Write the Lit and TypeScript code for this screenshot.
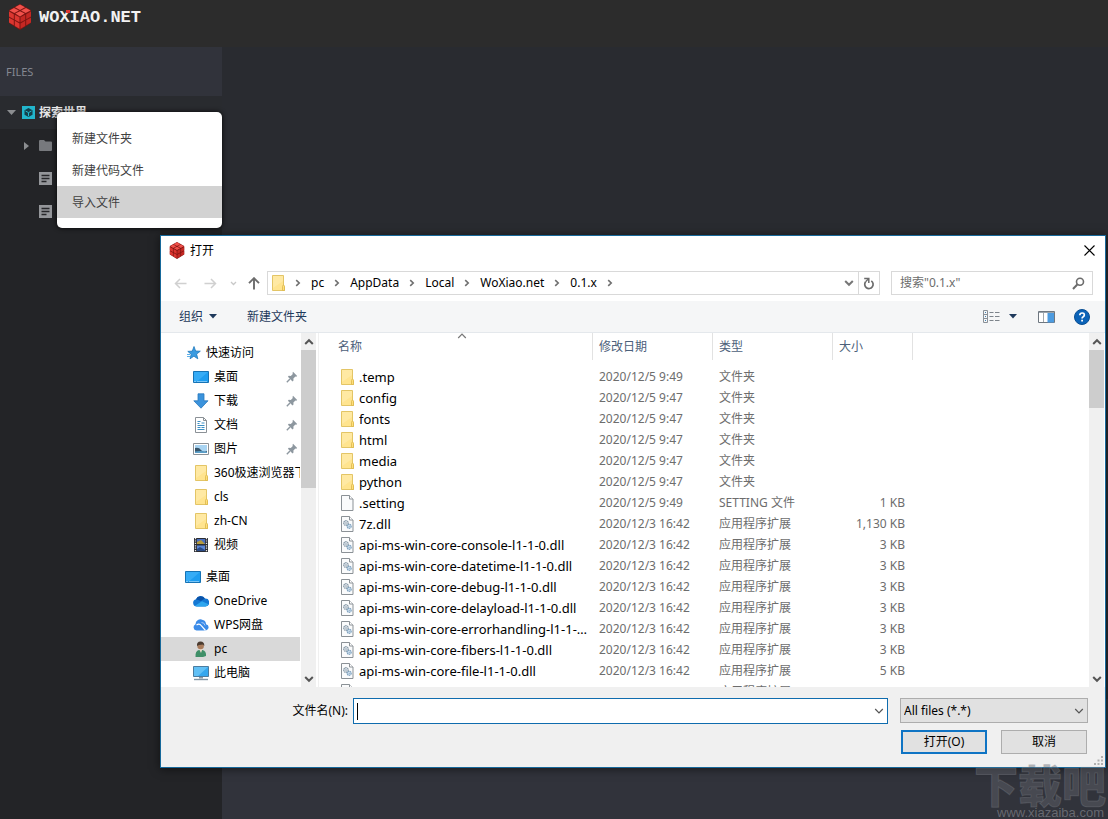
import { LitElement, html, svg, css, nothing } from "lit";
import { customElement } from "lit/decorators.js";

const cube = svg`
  <path d="M12 0 23 6v13L12 26 1 19V6z" fill="#7d1512"/>
  <path d="M12 .5 17 3.300 12 6 7 3.300z M6 4 11 6.600 6.300 9 1.500 6.400z M18 4 22.500 6.400 17.700 9 13 6.600z M12 7.200 16.700 9.600 12 12.400 7.300 9.600z" fill="#f0504a"/>
  <path d="M1 7.600 5.800 10.200v5L1 12.600z M6.800 10.700 11.500 13.300v5L6.800 15.700z M1 13.700 5.800 16.300v5L1 18.600z M6.800 16.800 11.500 19.400v5.400L6.800 22z" fill="#dc3630"/>
  <path d="M23 7.600 18.200 10.200v5L23 12.600z M17.200 10.700 12.500 13.300v5L17.200 15.700z M23 13.700 18.200 16.300v5L23 18.600z M17.200 16.800 12.500 19.400v5.400L17.200 22z" fill="#c42823"/>`;

const folderShape = svg`
  <path d="M.5 .5h11v10l1 1v4H.5z" fill="#ffe48f" stroke="#e3c566"/>
  <path d="M1 1h10v5L1 13z" fill="#ffedb0" opacity=".6"/>
  <path d="M10.500 15.500v-4q0-1.300 1-1.300t1 1.300v4z" fill="#ffdf7a" stroke="#dcb84c" stroke-width=".8"/>`;
const folder = html`<svg width="15" height="16" viewBox="0 0 15 16">${folderShape}</svg>`;
const sideFolder = html`<svg width="16" height="16" viewBox="-2 0 16 16">${folderShape}</svg>`;
const crumbFolder = html`<svg width="13" height="16" viewBox="0 0 13 16">${folderShape}</svg>`;

const pageShape = svg`
  <path d="M.5 .5h8l3.500 3.500v11.500H.5z" fill="#fafbfc" stroke="#8b9196"/>
  <path d="M8.500 .5v3.500h3.500" fill="#fff" stroke="#8b9196"/>`;
const page = html`<svg width="15" height="16" viewBox="0 0 15 16">${pageShape}</svg>`;

const dll = html`<svg width="15" height="16" viewBox="0 0 15 16">${pageShape}
  <circle cx="5" cy="7" r="2.300" fill="#dfe6ec" stroke="#8798a6" stroke-width="1.200" stroke-dasharray="1.400 .4"/>
  <circle cx="5" cy="7" r=".7" fill="#8798a6"/>
  <circle cx="8.200" cy="10.300" r="2" fill="#d3e2ef" stroke="#7fa3c0" stroke-width="1.200" stroke-dasharray="1.400 .4"/>
  <circle cx="8.200" cy="10.300" r=".6" fill="#7fa3c0"/></svg>`;

const sideIcons: Record<string, unknown> = {
  star: html`<svg width="16" height="16" viewBox="0 0 16 16">
    <path d="M9 1.500 10.600 6l4.700.2-3.700 2.900 1.200 4.700L8.900 11.200 5 13.800l1.200-4.500L2.800 6.400l4.500-.3z" fill="#3a9be0" stroke="#1e78bd" stroke-width=".8"/>
    <path d="M2 9.500h3M2 11.500h3" stroke="#5cb0ea"/></svg>`,
  desktop: html`<svg width="16" height="16" viewBox="0 0 16 16">
    <path d="M.5 2.500h15v11H.5z" fill="#1e9df0" stroke="#1673b5"/>
    <path d="M1 3h14L4 12.500H1z" fill="#4bb8fb" opacity=".55"/>
    <path d="M1.500 12.500h2m1 0h7m1 0h2" stroke="#d5efff" stroke-dasharray="1 1"/></svg>`,
  down: html`<svg width="16" height="16" viewBox="0 0 16 16">
    <path d="M5 .8h6v7h4L8 15.200.8 7.800H5z" fill="#3b93dc" stroke="#2a78bd" stroke-width=".8"/></svg>`,
  doc: html`<svg width="16" height="16" viewBox="0 0 16 16">
    <path d="M2.500 .5h8l3 3v12h-11z" fill="#fff" stroke="#8b9196"/><path d="M10.500 .5v3h3" fill="none" stroke="#8b9196"/>
    <path d="M4.500 4.500h3m1 1.500h3M4.500 6.500h2M4.500 8.500h7M4.500 10.500h3m1 0h3M4.500 12.500h7" stroke="#3c8fc4"/></svg>`,
  pic: html`<svg width="16" height="16" viewBox="0 0 16 16">
    <path d="M.5 2.500h15v11H.5z" fill="#fff" stroke="#8b9196"/><path d="M2 4h12v8H2z" fill="#a9d4f2"/>
    <path d="M2 7q4-1 6 2t6 1v2H2z" fill="#38566b"/><path d="M2 10.500q6-1 12 .5v1H2z" fill="#5a9fc9"/></svg>`,
  folder: sideFolder,
  film: html`<svg width="16" height="16" viewBox="0 0 16 16">
    <path d="M1 1h14v14H1z" fill="#2b2d33"/><path d="M2.500 1v14M13.500 1v14" stroke="#e8e8e8" stroke-width="1.300" stroke-dasharray="1.200 1.200"/>
    <path d="M4 2h8v5H4z" fill="#4a6fc0"/><path d="M4 8.500h8v5.500H4z" fill="#5b86d6"/><path d="M4 5l4-2 4 4H4z" fill="#b59a3b"/><path d="M4 12l3-2 5 3v1H4z" fill="#2a4a86"/></svg>`,
  cloud: html`<svg width="16" height="16" viewBox="0 0 16 16">
    <path d="M3.800 13.500A3.700 3.700 0 0 1 3 6.200 5 5 0 0 1 12 5.600 3.900 3.900 0 0 1 12.500 13.500z" fill="#1478d4"/>
    <path d="M3 6.200A5 5 0 0 1 11.900 5.600L8 8z" fill="#0a52a8"/><path d="M2 12.700 9 8.200l6.500 3A3.600 3.600 0 0 1 12.500 13.500H3.800q-1 0-1.800-.8z" fill="#2ea6ee"/></svg>`,
  wps: html`<svg width="16" height="16" viewBox="0 0 16 16">
    <path d="M3.500 13.500A3.300 3.300 0 0 1 2.500 7.200 4.800 4.800 0 0 1 9.800 3 4.300 4.300 0 0 1 13 7.200 3.200 3.200 0 0 1 13 13.500z" fill="#3b8be8"/>
    <path d="M3.500 8q3-2 5 1l4 4.500" fill="none" stroke="#fff" stroke-width="1.200"/><path d="M8.500 5.500q3 0 3.500 3" fill="none" stroke="#a9ccfa"/></svg>`,
  user: html`<svg width="16" height="16" viewBox="0 0 16 16">
    <path d="M2.500 16q-.5-6 3.500-7h3.500q4 1 3.500 6l-3 1z" fill="#3f8f68"/><path d="M6 8h3.500l-1.500 4z" fill="#e8d9c8"/>
    <circle cx="7.600" cy="5" r="3.300" fill="#a97c5c"/><path d="M4 5Q3.500 .5 7.500 .5T11.300 5L10 3.500 6 4z" fill="#4a3b30"/></svg>`,
  pc: html`<svg width="16" height="16" viewBox="0 0 16 16">
    <path d="M.5 1.500h15v10H.5z" fill="#35a7ee" stroke="#4b7c9f"/><path d="M1 2h14L5 11H1z" fill="#7fd0fa" opacity=".6"/>
    <path d="M6 12h4v1.500H6z" fill="#8b9aa5"/><path d="M1 14.500h14" stroke="#8296a5" stroke-width="1.400"/></svg>`,
};

const pin = html`<svg width="12" height="12" viewBox="0 0 12 12">
  <path d="M7 .8 11.200 5l-1 .8-.8-.2-2 2 .1 2-1 .8L1.900 5.800l.9-1 2 .1 2-2-.3-1z" fill="#8d979f"/>
  <path d="M4 8 .8 11.200" stroke="#8d979f" stroke-width="1.400"/></svg>`;

const chevron = (d: string, width = 1.5, color = "#555") =>
  html`<svg width="10" height="8" viewBox="0 0 10 8"><path d=${d} fill="none" stroke=${color} stroke-width=${width}/></svg>`;
const up = "M1.200 6 5 2.200 8.800 6";
const down = "M1.200 2 5 5.800 8.800 2";
const triangle = html`<svg width="8" height="5" viewBox="0 0 8 5"><path d="M0 0h8L4 4.500z" fill="#1f3a5c"/></svg>`;

const places = [
  { icon: "star", text: "快速访问", top: true },
  { icon: "desktop", text: "桌面", pinned: true },
  { icon: "down", text: "下载", pinned: true },
  { icon: "doc", text: "文档", pinned: true },
  { icon: "pic", text: "图片", pinned: true },
  { icon: "folder", text: "360极速浏览器下载" },
  { icon: "folder", text: "cls" },
  { icon: "folder", text: "zh-CN" },
  { icon: "film", text: "视频" },
  { icon: "desktop", text: "桌面", top: true, gap: true },
  { icon: "cloud", text: "OneDrive" },
  { icon: "wps", text: "WPS网盘" },
  { icon: "user", text: "pc", active: true },
  { icon: "pc", text: "此电脑" },
];

const D = "文件夹";
const A = "应用程序扩展";
const files: [unknown, string, string, string, string][] = [
  [folder, ".temp", "2020/12/5 9:49", D, ""],
  [folder, "config", "2020/12/5 9:47", D, ""],
  [folder, "fonts", "2020/12/5 9:47", D, ""],
  [folder, "html", "2020/12/5 9:47", D, ""],
  [folder, "media", "2020/12/5 9:47", D, ""],
  [folder, "python", "2020/12/5 9:47", D, ""],
  [page, ".setting", "2020/12/5 9:49", "SETTING 文件", "1 KB"],
  [dll, "7z.dll", "2020/12/3 16:42", A, "1,130 KB"],
  [dll, "api-ms-win-core-console-l1-1-0.dll", "2020/12/3 16:42", A, "3 KB"],
  [dll, "api-ms-win-core-datetime-l1-1-0.dll", "2020/12/3 16:42", A, "3 KB"],
  [dll, "api-ms-win-core-debug-l1-1-0.dll", "2020/12/3 16:42", A, "3 KB"],
  [dll, "api-ms-win-core-delayload-l1-1-0.dll", "2020/12/3 16:42", A, "3 KB"],
  [dll, "api-ms-win-core-errorhandling-l1-1-0.dll", "2020/12/3 16:42", A, "3 KB"],
  [dll, "api-ms-win-core-fibers-l1-1-0.dll", "2020/12/3 16:42", A, "3 KB"],
  [dll, "api-ms-win-core-file-l1-1-0.dll", "2020/12/3 16:42", A, "5 KB"],
  [dll, "api-ms-win-core-file-l1-2-0.dll", "2020/12/3 16:42", A, "3 KB"],
];

const reset = css`
  * { box-sizing: border-box; }
  svg { display: block; flex: none; }
  button, input, select { font: inherit; color: inherit; margin: 0; padding: 0; border: 0; background: none; border-radius: 0; outline: none; }
  a { color: inherit; text-decoration: none; }
`;

@customElement("scroll-bar")
class ScrollBar extends LitElement {
  static properties = { thumb: { type: Number } };
  declare thumb: number;
  static styles = [reset, css`
    :host { display: flex; flex-direction: column; width: 15px; flex: none; background: #f0f0f0; }
    .arrow { height: 17px; display: grid; place-items: center; }
    .track { flex: 1; }
    .thumb { background: #cdcdcd; }
  `];
  render() {
    return html`
      <button class="arrow" aria-label="向上滚动">${chevron(up, 2)}</button>
      <div class="track"><div class="thumb" style="height:${this.thumb}%"></div></div>
      <button class="arrow" aria-label="向下滚动">${chevron(down, 2)}</button>`;
  }
}

@customElement("open-dialog")
class OpenDialog extends LitElement {
  static styles = [reset, css`
    :host {
      display: flex; flex-direction: column; background: #fff; border: 1px solid #17699b;
      font: 12px/16px "Noto Sans", "Noto Sans CJK SC", sans-serif; color: #000;
      box-shadow: 0 1px 9px rgba(0, 0, 0, .55);
    }
    .title { display: flex; align-items: center; gap: 5px; height: 29px; padding: 0 10px 0 8px; }
    .title .name { flex: 1; font-size: 12px; }
    .nav { display: flex; align-items: center; height: 36px; padding: 0 12px; }
    .nav .arrows { display: flex; align-items: center; width: 94px; }
    .arrows button { display: grid; place-items: center; height: 20px; }
    .arrows .back { width: 15px; }
    .arrows .next { width: 15px; margin-left: 15px; }
    .arrows .recent { width: 18px; margin-left: 6px; }
    .arrows .up { width: 16px; margin-left: 4px; }
    .address { flex: 1; display: flex; align-items: center; height: 24px; border: 1px solid #d9d9d9; padding-left: 4px; }
    .crumbs { flex: 1; display: flex; align-items: center; gap: 10px; padding-bottom: 1px; }
    .address .drop { width: 19px; height: 22px; display: grid; place-items: center; }
    .address .reload { width: 21px; height: 22px; border-left: 1px solid #d9d9d9; display: grid; place-items: center; }
    .search { width: 202px; height: 24px; margin-left: 11px; border: 1px solid #d9d9d9; display: flex; align-items: center; padding: 0 7px 0 8px; }
    .search input { flex: 1; min-width: 0; }
    .search input::placeholder { color: #6d6d6d; opacity: 1; }
    .tools { display: flex; align-items: center; height: 32px; padding: 0 15px 0 18px; background: #f5f6f7; border-bottom: 1px solid #e4e8ec; color: #1e395b; }
    .tools button { display: flex; align-items: center; gap: 6px; }
    .tools .new { margin-left: 30px; }
    .tools .view { margin-left: auto; gap: 9px; }
    .tools .pane { margin-left: 21px; }
    .tools .help { margin-left: 19px; }
    .body { flex: 1; min-height: 0; display: flex; padding-right: 1px; }
    .places { width: 139px; margin: 0; padding: 8px 0 0; list-style: none; overflow: hidden; }
    .places a { display: flex; align-items: center; height: 24px; padding: 0 2px 0 32px; white-space: nowrap; overflow: hidden; }
    .places .top { padding-left: 24px; }
    .places .label { flex: 1; margin-left: 5px; }
    .places .long { flex: none; }
    .places .active { background: #d9d9d9; }
    .places .gap { margin-top: 8px; }
    .side-bar { margin-left: 1px; }
    .split { width: 3px; border-right: 1px solid #f0f0f0; }
    .list { flex: 1; min-width: 0; overflow: hidden; padding-left: 13px; }
    table { width: 100%; table-layout: fixed; border-spacing: 0; }
    .c-name { width: 261px; } .c-date, .c-type { width: 120px; } .c-size { width: 80px; }
    th { height: 27px; padding: 0 0 0 6px; font-weight: 400; text-align: left; color: #4c607a; border-right: 1px solid #e2e2e2; position: relative; }
    th.rest { border: 0; }
    .sort { position: absolute; left: calc(50% - 5px); top: -1px; }
    tbody::before { content: ""; display: block; height: 6px; }
    td { height: 21px; padding: 0 0 0 6px; color: #6d6d6d; white-space: nowrap; }
    td.size { padding-right: 8px; text-align: right; }
    td.file { color: #000; padding: 0 4px 0 9px; font-size: 13px; }
    .entry { display: flex; align-items: center; gap: 3px; }
    .entry .text { overflow: hidden; text-overflow: ellipsis; }
    .foot { background: #f0f0f0; padding: 11px 17px 13px 16px; display: grid; grid-template-columns: 176px 1fr 200px; row-gap: 6px; }
    .foot label { align-self: center; text-align: right; padding-right: 5px; }
    .combo { height: 26px; border: 1px solid #0f6cae; background: #fff; display: flex; align-items: center; padding: 0 3px; }
    .caret { width: 1px; height: 17px; background: #000; }
    .combo input { flex: 1; min-width: 0; }
    .filter { margin-left: 12px; display: grid; height: 25px; }
    .filter select { grid-area: 1 / 1; appearance: none; background: #e1e1e1; border: 1px solid #adadad; padding: 0 3px; }
    .filter svg { grid-area: 1 / 1; justify-self: end; align-self: center; margin-right: 4px; pointer-events: none; }
    .actions { grid-column: 1 / -1; display: flex; justify-content: flex-end; gap: 14px; padding-right: 1px; }
    .actions button { width: 86px; height: 24px; background: #e1e1e1; border: 1px solid #adadad; }
    .actions .primary { border: 2px solid #0f74c4; }
    .grip { position: absolute; right: 2px; bottom: 2px; }
  `];

  render() {
    const crumb = html`<svg width="6" height="8" viewBox="0 0 6 8"><path d="M1.200 1.200 4.200 4 1.200 6.800" fill="none" stroke="#6f6f6f" stroke-width="1.600"/></svg>`;
    return html`
      <div class="title">
        <svg width="16" height="17" viewBox="0 0 24 26">${cube}</svg>
        <span class="name">打开</span>
        <button aria-label="关闭"><svg width="11" height="11" viewBox="0 0 11 11"><path d="M.5 .5l10 10M10.500 .5l-10 10" stroke="#000" stroke-width="1.100"/></svg></button>
      </div>
      <div class="nav">
        <div class="arrows">
          <button class="back" aria-label="后退"><svg width="13" height="11" viewBox="0 0 13 11"><path d="M12.500 5.500H1.500M6 1 1.500 5.500 6 10" fill="none" stroke="#d0d0d0" stroke-width="1.500"/></svg></button>
          <button class="next" aria-label="前进"><svg width="13" height="11" viewBox="0 0 13 11"><path d="M.5 5.500h11M7 1l4.500 4.500L7 10" fill="none" stroke="#d0d0d0" stroke-width="1.500"/></svg></button>
          <button class="recent" aria-label="最近浏览的位置"><svg width="7" height="5" viewBox="0 0 7 5"><path d="M1 1 3.500 3.500 6 1" fill="none" stroke="#c8c8c8" stroke-width="1.300"/></svg></button>
          <button class="up" aria-label="上移"><svg width="12" height="13" viewBox="0 0 12 13"><path d="M6 12.500V1.500M1 6.200 6 1.200l5 5" fill="none" stroke="#6c6c6c" stroke-width="1.900"/></svg></button>
        </div>
        <div class="address">
          <div class="crumbs">${crumbFolder}${["pc", "AppData", "Local", "WoXiao.net", "0.1.x"].map((c) => html`${crumb}<a href="#">${c}</a>`)}${crumb}</div>
          <button class="drop" aria-label="以前的位置">${chevron(down, 2, "#777")}</button>
          <button class="reload" aria-label="刷新"><svg width="12" height="13" viewBox="0 0 12 13"><path d="M8.300 3.900A4.200 4.200 0 1 1 2.600 4.800" fill="none" stroke="#6c6c6c" stroke-width="1.700"/><path d="M1.200 1.500h4.600v4.600" fill="none" stroke="#6c6c6c" stroke-width="1.500"/><path d="M2.600 4.800 5.500 1.800" stroke="#6c6c6c" stroke-width="1.300"/></svg></button>
        </div>
        <div class="search">
          <input aria-label="搜索" placeholder='搜索"0.1.x"'>
          <svg width="13" height="13" viewBox="0 0 13 13"><circle cx="8" cy="4.700" r="3.500" fill="none" stroke="#6c6c6c" stroke-width="1.600"/><path d="M5.300 7.500 1 12" stroke="#6c6c6c" stroke-width="2"/></svg>
        </div>
      </div>
      <div class="tools">
        <button>组织 ${triangle}</button>
        <button class="new">新建文件夹</button>
        <button class="view" aria-label="更改视图">
          <svg width="17" height="13" viewBox="0 0 17 13"><path d="M.5 .5h4v12h-4zM.5 4.500h4M.5 8.500h4" fill="none" stroke="#8a9097"/><path d="M6.500 2.500h4m1.500 0h4.500M6.500 6.500h4m1.500 0h4.500M6.500 10.500h4m1.500 0h4.500" stroke="#7d848b"/><path d="M2 2.500h1M2 6.500h1M2 10.500h1" stroke="#3f82b5"/></svg>
          ${triangle}
        </button>
        <button class="pane" aria-label="显示预览窗格"><svg width="17" height="12" viewBox="0 0 17 12"><path d="M.5 .5h16v11H.5z" fill="#fff" stroke="#6e7780"/><path d="M1 1.500h15" stroke="#9aa3ab"/><path d="M9.500 2v9.500h6.500V2z" fill="#4c9be0"/><path d="M5.500 2v9" stroke="#a0a7ad"/></svg></button>
        <button class="help" aria-label="帮助"><svg width="16" height="16" viewBox="0 0 16 16"><circle cx="8" cy="8" r="7.500" fill="#0b63b8" stroke="#0a4f93"/><path d="M5.800 6.200Q5.900 4 8.100 4t2.200 1.900Q10.300 7 9.200 7.700 8.100 8.300 8.100 9.600" fill="none" stroke="#fff" stroke-width="1.700"/><path d="M7.200 10.800h1.800v1.700H7.200z" fill="#fff"/></svg></button>
      </div>
      <div class="body">
        <ul class="places">
          ${places.map((p) => html`<li class=${p.gap ? "gap" : ""}>
            <a href="#" class="${p.top ? "top" : ""} ${p.active ? "active" : ""}">${sideIcons[p.icon]}<span class="label ${p.text.length > 8 ? "long" : ""}">${p.text}</span>${p.pinned ? pin : nothing}</a></li>`)}
        </ul>
        <scroll-bar class="side-bar" .thumb=${43}></scroll-bar>
        <div class="split"></div>
        <div class="list">
          <table>
            <colgroup><col class="c-name"><col class="c-date"><col class="c-type"><col class="c-size"><col></colgroup>
            <thead><tr>
              <th>名称<span class="sort">${chevron(up, 1.2, "#777")}</span></th>
              <th>修改日期</th><th>类型</th><th>大小</th><th class="rest"></th>
            </tr></thead>
            <tbody>
              ${files.map(([icon, name, date, type, size]) => html`<tr>
                <td class="file"><div class="entry">${icon}<span class="text">${name}</span></div></td>
                <td>${date}</td><td>${type}</td><td class="size">${size}</td><td></td></tr>`)}
            </tbody>
          </table>
        </div>
        <scroll-bar .thumb=${18}></scroll-bar>
      </div>
      <div class="foot">
        <label for="fname">文件名(N):</label>
        <div class="combo"><span class="caret"></span><input id="fname" type="text">${chevron(down, 1.2)}</div>
        <div class="filter">
          <select aria-label="文件类型"><option>All files (*.*)</option></select>
          ${chevron(down, 1.2)}
        </div>
        <div class="actions"><button class="primary">打开(O)</button><button>取消</button></div>
      </div>
      <svg class="grip" width="9" height="9" viewBox="0 0 9 9"><path d="M7 0h2v2H7zM7 3.500h2v2H7zM3.500 3.500h2v2h-2zM7 7h2v2H7zM3.500 7h2v2h-2zM0 7h2v2H0z" fill="#b0b0b0"/></svg>`;
  }
}

@customElement("app-root")
class AppRoot extends LitElement {
  static styles = [reset, css`
    :host {
      display: flex; flex-direction: column; position: relative; height: 100vh; overflow: hidden;
      background: #292b30; font: 12px/16px "Noto Sans", "Noto Sans CJK SC", sans-serif;
    }
    .bar { display: flex; align-items: flex-start; gap: 7px; height: 47px; padding: 4px 8px; background: #2c2c2c; }
    .brand { position: relative; font: 700 17px/27px "Liberation Mono", monospace; color: #f2f2f2; }
    .dot { position: absolute; left: 27px; top: 6px; width: 4px; height: 3px; background: #dc3630; }
    .work { flex: 1; display: flex; min-height: 0; }
    .side { width: 222px; background: #232427; }
    .head { height: 49px; padding: 17px 6px; background: #31333b; color: #858891; font-size: 11px; }
    .root { display: flex; align-items: center; height: 33px; padding-left: 7px; background: #292b2f; color: #e6e6e6; font-weight: 700; }
    .root .mark { margin: 0 4px 0 6px; }
    .node { display: flex; align-items: center; gap: 10px; height: 33px; padding-left: 24px; }
    .leaf { padding-left: 39px; }
    .stage { flex: 1; display: flex; flex-direction: column; justify-content: flex-end; }
    .panel { height: 120px; background: #31333b; }
    .menu {
      position: absolute; left: 57px; top: 112px; width: 165px; padding: 10px 0; border-radius: 5px;
      background: #fff; box-shadow: 0 0 5px rgba(0, 0, 0, .9);
    }
    .menu button { display: block; width: 100%; height: 32px; padding: 2px 0 0 15px; text-align: left; color: #3f3f3f; }
    .menu .hot { background: #d2d2d2; }
    .dialog { position: absolute; left: 160px; right: 2px; top: 235px; bottom: 51px; }
    .mark-text { position: absolute; right: 0; bottom: 0; text-align: right; pointer-events: none; }
    .big { font: 900 44px/44px "Noto Sans CJK SC", sans-serif; color: rgba(100, 103, 111, .45); -webkit-text-stroke: 1px rgba(150, 152, 158, .25); padding-right: 2px; }
    .url { font: 13px/13px "Liberation Sans", sans-serif; color: rgba(140, 142, 149, .6); padding-right: 4px; }
  `];

  render() {
    const note = html`<svg width="13" height="13" viewBox="0 0 13 13"><path d="M0 0h13v13H0z" fill="#94969a"/><path d="M2.500 3.500h8M2.500 6.500h8M2.500 9.500h5" stroke="#26272a" stroke-width="1.300"/></svg>`;
    return html`
      <header class="bar">
        <svg width="24" height="26" viewBox="0 0 24 26">${cube}</svg>
        <span class="brand">WOXIAO.NET<span class="dot"></span></span>
      </header>
      <div class="work">
        <nav class="side">
          <div class="head">FILES</div>
          <div class="root">
            <svg width="9" height="5" viewBox="0 0 9 5"><path d="M0 0h9L4.500 5z" fill="#8b8d90"/></svg>
            <svg class="mark" width="13" height="13" viewBox="0 0 13 13"><path d="M0 0h13v13H0z" fill="#22b5cc"/><path d="M6.500 2 10.500 4.200v4.600l-4 2.200-4-2.200V4.200z" fill="#143f4b"/><path d="M3.500 5 6.500 6.600 9.500 5M6.500 6.600v3.600" fill="none" stroke="#22b5cc"/></svg>
            探索世界
          </div>
          <div class="node">
            <svg width="5" height="8" viewBox="0 0 5 8"><path d="M0 0v8l5-4z" fill="#8b8d90"/></svg>
            <svg width="13" height="11" viewBox="0 0 13 11"><path d="M0 1q0-1 1-1h4l1.500 1.500H12q1 0 1 1V10q0 1-1 1H1q-1 0-1-1z" fill="#77797d"/></svg>
          </div>
          <div class="node leaf">${note}</div>
          <div class="node leaf">${note}</div>
        </nav>
        <main class="stage"><div class="panel"></div></main>
      </div>
      <div class="menu" role="menu">
        <button role="menuitem">新建文件夹</button>
        <button role="menuitem">新建代码文件</button>
        <button role="menuitem" class="hot">导入文件</button>
      </div>
      <open-dialog class="dialog" role="dialog" aria-label="打开"></open-dialog>
      <div class="mark-text">
        <div class="big">下载吧</div>
        <div class="url">www.xiazaiba.com</div>
      </div>`;
  }
}
